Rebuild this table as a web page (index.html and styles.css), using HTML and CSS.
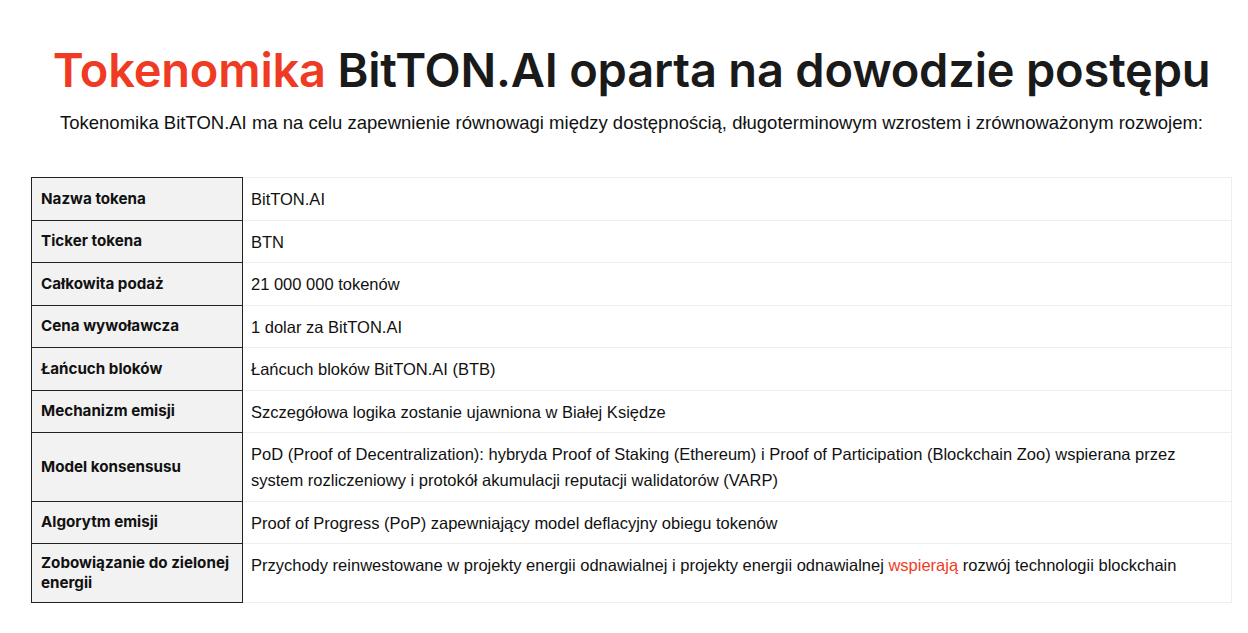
FILE: index.html
```html
<!DOCTYPE html>
<html lang="pl">
<head>
<meta charset="utf-8">
<title>Tokenomika BitTON.AI</title>
<link rel="stylesheet" href="styles.css">
</head>
<body>
<main class="page">
  <h1 class="title"><span class="accent">Tokenomika</span> BitTON.AI oparta na dowodzie postępu</h1>
  <p class="lead">Tokenomika BitTON.AI ma na celu zapewnienie równowagi między dostępnością, długoterminowym wzrostem i zrównoważonym rozwojem:</p>
  <table class="tok">
    <tbody>
      <tr><th>Nazwa tokena</th><td>BitTON.AI</td></tr>
      <tr><th>Ticker tokena</th><td>BTN</td></tr>
      <tr><th>Całkowita podaż</th><td>21 000 000 tokenów</td></tr>
      <tr><th>Cena wywoławcza</th><td>1 dolar za BitTON.AI</td></tr>
      <tr><th>Łańcuch bloków</th><td>Łańcuch bloków BitTON.AI (BTB)</td></tr>
      <tr><th>Mechanizm emisji</th><td>Szczegółowa logika zostanie ujawniona w Białej Księdze</td></tr>
      <tr><th>Model konsensusu</th><td>PoD (Proof of Decentralization): hybryda Proof of Staking (Ethereum) i Proof of Participation (Blockchain Zoo) wspierana przez system rozliczeniowy i protokół akumulacji reputacji walidatorów (VARP)</td></tr>
      <tr><th>Algorytm emisji</th><td>Proof of Progress (PoP) zapewniający model deflacyjny obiegu tokenów</td></tr>
      <tr><th>Zobowiązanie do zielonej energii</th><td>Przychody reinwestowane w projekty energii odnawialnej i projekty energii odnawialnej <span class="hl">wspierają</span> rozwój technologii blockchain</td></tr>
    </tbody>
  </table>
</main>
</body>
</html>
```

FILE: styles.css
```css
html, body {
  margin: 0;
  padding: 0;
  background: #ffffff;
}
.page {
  padding: 36px 16px 0 31px;
  display: flex;
  flex-direction: column;
  align-items: stretch;
}
.title {
  margin: 0;
  text-align: center;
  font-family: "Inter", "Liberation Sans", sans-serif;
  font-weight: 600;
  font-size: 47px;
  line-height: 68px;
  color: #1a1a1a;
  letter-spacing: -0.2px;
}
.accent {
  color: #ef3b24;
}
.lead {
  margin: 7px 0 0;
  text-align: center;
  font-family: "Liberation Sans", Arial, sans-serif;
  font-size: 18.5px;
  line-height: 24px;
  color: #111;
}
.tok {
  margin-top: 42px;
  width: 100%;
  border-collapse: collapse;
  font-family: "Liberation Sans", Arial, sans-serif;
}
.tok th {
  width: 192px;
  text-align: left;
  vertical-align: middle;
  background: #f2f2f2;
  border: 1px solid #222;
  padding: 9px 9px;
  font-family: "Inter", "Liberation Sans", sans-serif;
  font-weight: 700;
  font-size: 15.2px;
  line-height: 20px;
  color: #111;
}
.tok td {
  vertical-align: top;
  border: 1px solid #eeeeee;
  border-left-color: #222;
  padding: 8px 9px 7.5px 8px;
  font-size: 16.5px;
  line-height: 26px;
  color: #111;
}
.hl {
  color: #ef3b24;
}
```
